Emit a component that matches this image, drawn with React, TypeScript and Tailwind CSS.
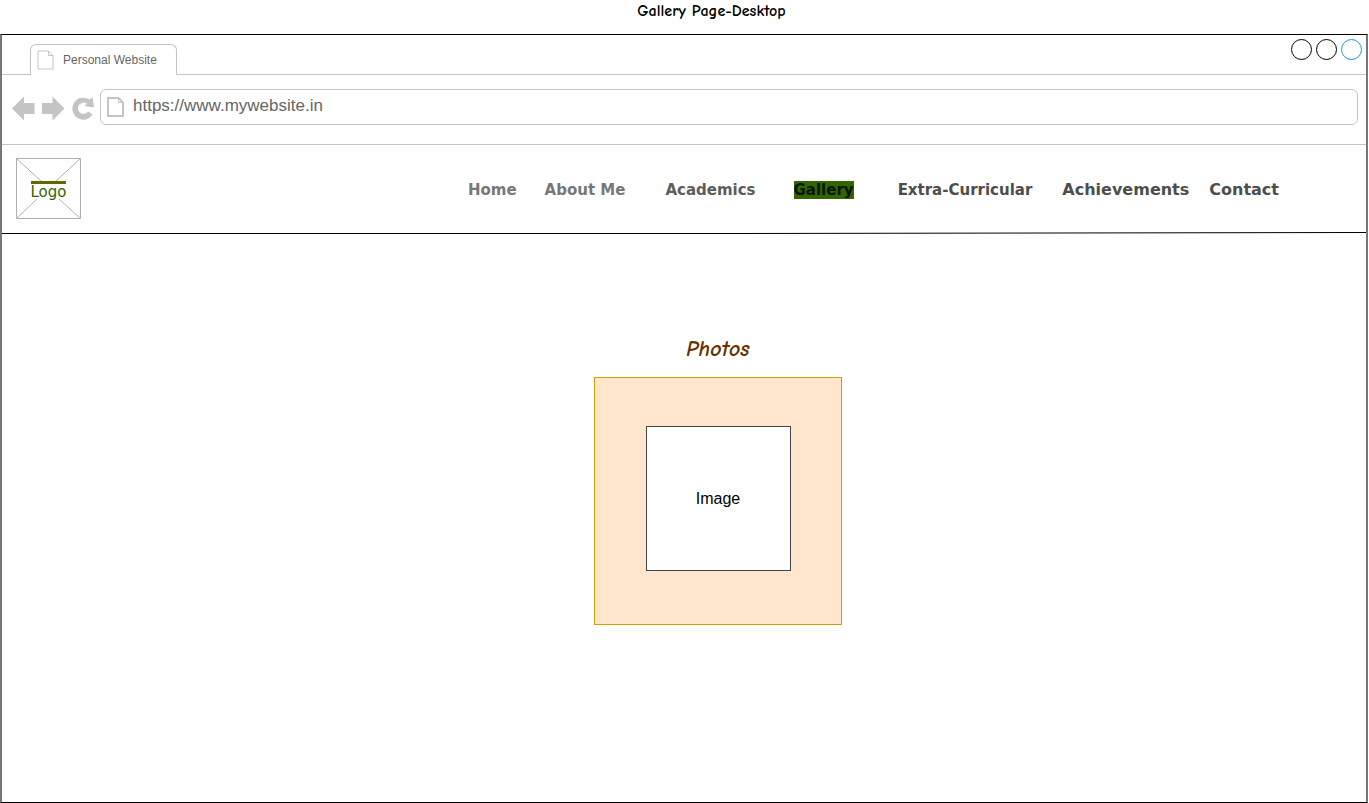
import React from "react";

type NavItem = { label: string; href: string; className: string; active?: boolean };

const navItems: NavItem[] = [
  { label: "Home", href: "#home", className: "ml-0 text-[15px] text-[#777777]" },
  { label: "About Me", href: "#about", className: "ml-7 text-[15px] text-[#777777]" },
  { label: "Academics", href: "#academics", className: "ml-10 text-[15px] text-[#5c5c5c]" },
  { label: "Gallery", href: "#gallery", className: "ml-[38px] bg-[#336600] text-[15px] text-[#0a1400]", active: true },
  { label: "Extra-Curricular", href: "#extra", className: "ml-11 text-[15px] text-[#4d4d4d]" },
  { label: "Achievements", href: "#achievements", className: "ml-[30px] text-base text-[#4d4d4d]" },
  { label: "Contact", href: "#contact", className: "ml-5 text-base text-[#4d4d4d]" },
];

function PageIcon({ className, strokeWidth }: { className: string; strokeWidth: number }) {
  return (
    <svg className={className} viewBox="0 0 17 20" fill="none" stroke="#c4c4c4" strokeWidth={strokeWidth} aria-hidden="true">
      <path d="M1 1H11.5L16 5.5V19H1Z" />
      <path d="M11.5 1V5.5H16" strokeWidth="1" />
    </svg>
  );
}

function TabBar() {
  return (
    <div className="flex h-10 items-end">
      <div className="h-px w-7 bg-[#c4c4c4]" />
      <div className="flex h-[31px] w-[147px] items-center rounded-t-md border border-b-0 border-[#c4c4c4] pl-1.5">
        <PageIcon className="h-5 w-[17px]" strokeWidth={1} />
        <span className="ml-[9px] text-xs text-[#666666]">Personal Website</span>
      </div>
      <div className="flex h-full flex-1 items-start justify-end gap-1 border-b border-[#c4c4c4] pr-1 pt-1">
        <button type="button" aria-label="Minimize" className="size-[21px] rounded-full border border-black" />
        <button type="button" aria-label="Maximize" className="size-[21px] rounded-full border border-black" />
        <button type="button" aria-label="Close" className="size-[21px] rounded-full border border-[#1e90e8]" />
      </div>
    </div>
  );
}

function Toolbar() {
  return (
    <div className="flex h-[70px] items-start border-b border-[#c4c4c4] pl-2.5 pr-2 pt-3.5">
      <div className="mt-[7px] flex items-center gap-[7px]">
        <button type="button" aria-label="Back">
          <svg className="block h-[25px] w-[23px]" viewBox="0 0 23 25" fill="#c4c4c4">
            <path d="M0 12.5L12 0.5V7H22.5V18H12V24.5Z" />
          </svg>
        </button>
        <button type="button" aria-label="Forward">
          <svg className="block h-[25px] w-[23px]" viewBox="0 0 23 25" fill="#c4c4c4">
            <path d="M22.5 12.5L10.5 0.5V7H0V18H10.5V24.5Z" />
          </svg>
        </button>
        <button type="button" aria-label="Reload">
          <svg className="block h-[25px] w-[22px]" viewBox="0 0 22 25" fill="#c4c4c4">
            <path d="M17.6 3.6L20.6 1.6L22 11.5L12.4 10L15 7.8A5.6 5.6 0 1 0 16 15.6L20.6 18.6A11 11 0 1 1 17.6 3.6Z" />
          </svg>
        </button>
      </div>
      <div className="ml-1.5 flex h-9 min-w-0 flex-1 items-center rounded-md border border-[#c4c4c4] pl-1.5">
        <PageIcon className="h-5 w-[17px] shrink-0" strokeWidth={2} />
        <input
          type="text"
          aria-label="Address"
          defaultValue="https://www.mywebsite.in"
          className="ml-[9px] min-w-0 flex-1 bg-transparent pb-0.5 text-[17px] leading-6 text-[#666666] outline-none"
        />
      </div>
    </div>
  );
}

function Logo() {
  return (
    <a href="#home" className="grid h-[61px] w-[65px] shrink-0 place-items-center">
      <svg className="col-start-1 row-start-1 size-full" viewBox="0 0 65 61" fill="none" stroke="#b0b0b0" aria-hidden="true">
        <path d="M0.5 0.5H64.5V60.5H0.5Z" />
        <path d="M0.5 0.5L25 23M64.5 0.5L40 23M0.5 60.5L21 41M64.5 60.5L43 41" />
      </svg>
      <span className="col-start-1 row-start-1 mt-1 border-t-[3px] border-[#666600] font-[DejaVu_Sans,sans-serif] text-[15px] leading-[17px] text-[#336600]">
        Logo
      </span>
    </a>
  );
}

function SiteHeader() {
  return (
    <header>
      <div className="flex h-[87px] items-center justify-between pl-3.5 pr-[87px]">
        <Logo />
        <nav aria-label="Main" className="flex items-center pt-0.5 font-[DejaVu_Sans,sans-serif] font-bold">
          {navItems.map((item) => (
            <a
              key={item.label}
              href={item.href}
              aria-current={item.active ? "page" : undefined}
              className={`whitespace-nowrap leading-[18px] ${item.className}`}
            >
              {item.label}
            </a>
          ))}
        </nav>
      </div>
      <svg className="block h-0.5 w-full" viewBox="0 0 1364 2" preserveAspectRatio="none" aria-hidden="true">
        <path d="M0 1.5H740L1364 0.5" stroke="#000000" fill="none" />
      </svg>
    </header>
  );
}

export default function App() {
  return (
    <div className="flex min-h-screen flex-col bg-white pr-px font-[Liberation_Sans,Arial,sans-serif]">
      <h1 className="h-[34px] pl-[55px] text-center font-[Comic_Sans_MS,Comic_Neue,Lato,sans-serif] text-base font-bold leading-[22px] text-black">
        Gallery Page-Desktop
      </h1>
      <div className="flex flex-1 flex-col border-x-2 border-y border-x-[#777777] border-y-black">
        <TabBar />
        <Toolbar />
        <SiteHeader />
        <main className="flex flex-col items-center pl-[68px] pt-[101px]">
          <h2 className="font-[Comic_Sans_MS,Comic_Neue,Lato,sans-serif] text-[22px] font-bold italic leading-7 text-[#663300]">
            Photos
          </h2>
          <div className="mt-3.5 flex size-[248px] items-start justify-center border border-[#d79b00] bg-[#ffe6cc] pt-12">
            <div className="flex size-[145px] items-center justify-center border border-[#444444] bg-white text-base text-black">
              Image
            </div>
          </div>
        </main>
      </div>
    </div>
  );
}
